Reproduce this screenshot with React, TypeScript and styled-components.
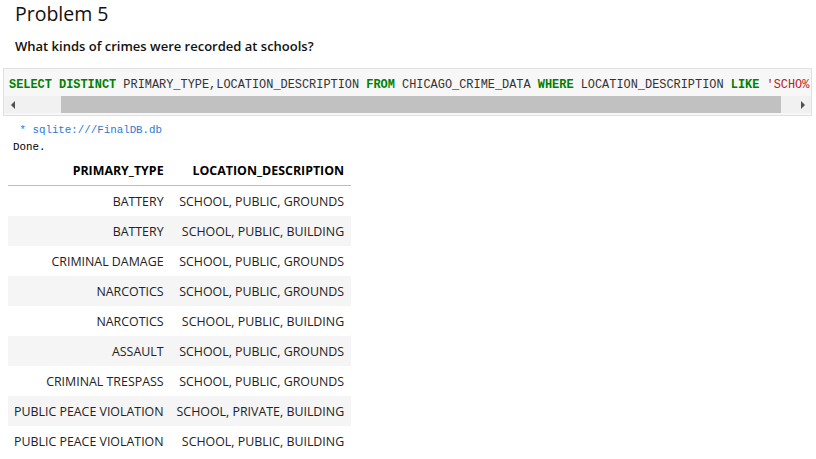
import React from "react";
import styled, { createGlobalStyle } from "styled-components";

const Global = createGlobalStyle`
  html, body { margin: 0; padding: 0; background: #fff; }
  body { font-family: "Open Sans", "Noto Sans", sans-serif; color: #000; }
`;

const Page = styled.div`
  width: 816px;
  height: 459px;
  overflow: hidden;
  display: flex;
  flex-direction: column;
`;

const Title = styled.h1`
  margin: 1px 0 0 15px;
  font-size: 19.5px;
  font-weight: 500;
  line-height: 26px;
  color: #111;
`;

const Subtitle = styled.p`
  margin: 10px 0 0 15px;
  font-size: 13px;
  font-weight: 600;
  line-height: 18px;
  color: #111;
`;

const CodeBox = styled.div`
  margin: 13px 4px 0 3px;
  border: 1px solid #e0e0e0;
  background: #f7f7f7;
  display: flex;
  flex-direction: column;
  overflow: hidden;
`;

const CodeLine = styled.pre`
  margin: 0;
  padding: 7px 0 2px 5px;
  font-family: "Liberation Mono", "DejaVu Sans Mono", monospace;
  font-size: 11.92px;
  line-height: 18px;
  color: #333;
  white-space: pre;
`;

const Kw = styled.span`
  color: #008000;
  font-weight: 700;
`;

const Str = styled.span`
  color: #ba2121;
`;

const ScrollTrack = styled.div`
  height: 17px;
  background: #f1f1f1;
  display: flex;
  align-items: center;
  margin-bottom: 2px;
`;

const ArrowBtn = styled.div<{ $dir: "left" | "right" }>`
  width: 17px;
  flex: none;
  height: 17px;
  display: flex;
  align-items: center;
  justify-content: center;
  &::before {
    content: "";
    width: 0;
    height: 0;
    border-top: 4px solid transparent;
    border-bottom: 4px solid transparent;
    ${(p) =>
      p.$dir === "left"
        ? "border-right: 4px solid #505050;"
        : "border-left: 4px solid #505050;"}
  }
`;

const Thumb = styled.div`
  height: 17px;
  background: #c1c1c1;
  margin-left: 40px;
  width: 720px;
`;

const Spacer = styled.div`
  flex: 1;
`;

const Output = styled.div`
  margin: 6px 0 0 13px;
  font-family: "Liberation Mono", "DejaVu Sans Mono", monospace;
  font-size: 10.8px;
  line-height: 17px;
  white-space: pre;
`;

const Link = styled.div`
  color: #2a7bd5;
`;

const Done = styled.div`
  color: #000;
`;

const Table = styled.table`
  margin: 3px 0 0 8px;
  border-collapse: collapse;
  width: 343px;
  font-size: 12.4px;
  color: #222;
`;

const Th = styled.th`
  text-align: right;
  font-weight: 700;
  color: #000;
  height: 22px;
  padding: 0 7px 4px 6px;
  border-bottom: 1px solid #bdbdbd;
  white-space: nowrap;
  vertical-align: middle;
`;

const Tr = styled.tr<{ $odd: boolean }>`
  background: ${(p) => (p.$odd ? "#f5f5f5" : "#fff")};
`;

const Td = styled.td`
  text-align: right;
  height: 30px;
  padding: 0 7px 0 6px;
  white-space: nowrap;
  vertical-align: middle;
`;

const rows: [string, string][] = [
  ["BATTERY", "SCHOOL, PUBLIC, GROUNDS"],
  ["BATTERY", "SCHOOL, PUBLIC, BUILDING"],
  ["CRIMINAL DAMAGE", "SCHOOL, PUBLIC, GROUNDS"],
  ["NARCOTICS", "SCHOOL, PUBLIC, GROUNDS"],
  ["NARCOTICS", "SCHOOL, PUBLIC, BUILDING"],
  ["ASSAULT", "SCHOOL, PUBLIC, GROUNDS"],
  ["CRIMINAL TRESPASS", "SCHOOL, PUBLIC, GROUNDS"],
  ["PUBLIC PEACE VIOLATION", "SCHOOL, PRIVATE, BUILDING"],
  ["PUBLIC PEACE VIOLATION", "SCHOOL, PUBLIC, BUILDING"],
];

export default function App() {
  return (
    <>
      <Global />
      <Page>
        <Title>Problem 5</Title>
        <Subtitle>What kinds of crimes were recorded at schools?</Subtitle>
        <CodeBox>
          <CodeLine>
            <Kw>SELECT</Kw> <Kw>DISTINCT</Kw> PRIMARY_TYPE,LOCATION_DESCRIPTION{" "}
            <Kw>FROM</Kw> CHICAGO_CRIME_DATA <Kw>WHERE</Kw> LOCATION_DESCRIPTION{" "}
            <Kw>LIKE</Kw> <Str>'SCHO%</Str>
          </CodeLine>
          <ScrollTrack>
            <ArrowBtn $dir="left" />
            <Thumb />
            <Spacer />
            <ArrowBtn $dir="right" />
          </ScrollTrack>
        </CodeBox>
        <Output>
          <Link> * sqlite:///FinalDB.db</Link>
          <Done>Done.</Done>
        </Output>
        <Table>
          <thead>
            <tr>
              <Th>PRIMARY_TYPE</Th>
              <Th>LOCATION_DESCRIPTION</Th>
            </tr>
          </thead>
          <tbody>
            {rows.map((r, i) => (
              <Tr key={i} $odd={i % 2 === 1}>
                <Td>{r[0]}</Td>
                <Td>{r[1]}</Td>
              </Tr>
            ))}
          </tbody>
        </Table>
      </Page>
    </>
  );
}
